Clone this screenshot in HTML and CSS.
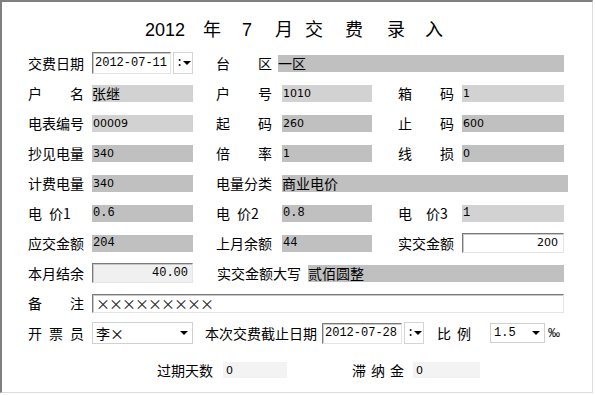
FILE: index.html
```html
<!DOCTYPE html>
<html lang="zh-CN">
<head>
  <meta charset="UTF-8" />
  <title>2012年7月交费录入</title>
  <link rel="stylesheet" href="styles.css">
</head>
<body>
  <!-- Payment entry window -->
  <div class="window">
    <h1 class="title">
      <span>2012</span><span>年</span><span>7</span><span>月</span><span>交</span><span>费</span><span>录</span><span>入</span>
    </h1>

    <div class="row">
      <span class="lbl">交费日期</span>
      <div class="date mono">2012-07-11</div>
      <div class="spin"><span>:</span><i class="caret"></i></div>
      <span class="lbl lbl-area">台　　区</span>
      <div class="box han wide">一区</div>
    </div>

    <div class="row">
      <span class="lbl">户　　名</span>
      <div class="box light han f1">张继</div>
      <span class="lbl c2">户　　号</span>
      <div class="box light f2">1010</div>
      <span class="lbl c3">箱　　码</span>
      <div class="box light f3">1</div>
    </div>

    <div class="row">
      <span class="lbl">电表编号</span>
      <div class="box light f1">00009</div>
      <span class="lbl c2">起　　码</span>
      <div class="box f2">260</div>
      <span class="lbl c3">止　　码</span>
      <div class="box f3">600</div>
    </div>

    <div class="row">
      <span class="lbl">抄见电量</span>
      <div class="box f1">340</div>
      <span class="lbl c2">倍　　率</span>
      <div class="box f2">1</div>
      <span class="lbl c3">线　　损</span>
      <div class="box f3">0</div>
    </div>

    <div class="row">
      <span class="lbl">计费电量</span>
      <div class="box f1">340</div>
      <span class="lbl c2">电量分类</span>
      <div class="box han wide">商业电价</div>
    </div>

    <div class="row">
      <span class="lbl">电&ensp;价1</span>
      <div class="box mono f1">0.6</div>
      <span class="lbl c2">电&ensp;价2</span>
      <div class="box mono f2">0.8</div>
      <span class="lbl c3">电　价3</span>
      <div class="box light mono f3">1</div>
    </div>

    <div class="row">
      <span class="lbl">应交金额</span>
      <div class="box mono f1">204</div>
      <span class="lbl c2">上月余额</span>
      <div class="box mono f2">44</div>
      <span class="lbl c3">实交金额</span>
      <div class="sunken num f3">200</div>
    </div>

    <div class="row">
      <span class="lbl">本月结余</span>
      <div class="sunken grey mono f1">40.00</div>
      <span class="lbl c2 lbl-caps">实交金额大写</span>
      <div class="box han caps">贰佰圆整</div>
    </div>

    <div class="row">
      <span class="lbl">备　　注</span>
      <div class="sunken memo">×××××××××</div>
    </div>

    <div class="row">
      <span class="lbl spaced">开票员</span>
      <div class="combo f1"><span class="han">李×</span><i class="caret"></i></div>
      <span class="lbl lbl-due">本次交费截止日期</span>
      <div class="date mono date-due">2012-07-28</div>
      <div class="spin"><span>:</span><i class="caret"></i></div>
      <span class="lbl lbl-ratio">比例</span>
      <div class="combo ratio"><span class="mono">1.5</span><i class="caret"></i></div>
      <span class="permil">‰</span>
    </div>

    <div class="row row-late">
      <span class="lbl lbl-days">过期天数</span>
      <div class="box pale days">0</div>
      <span class="lbl lbl-fine">滞纳金</span>
      <div class="box pale fine">0</div>
    </div>
  </div>
</body>
</html>
```

FILE: styles.css
```css
* {
  margin: 0;
  padding: 0;
  box-sizing: border-box;
}

body {
  background: #fff;
  color: #000;
  font-family: "Noto Sans CJK SC", "Liberation Sans", sans-serif;
  font-size: 14px;
}

/* Outer window frame */
.window {
  width: 593px;
  height: 393px;
  border-top: 2px solid #808080;
  border-left: 2px solid #808080;
  border-right: 1px solid #dcdcdc;
  border-bottom: 1px solid #dcdcdc;
  padding: 11px 0 0 26px;
}

/* Heading, each glyph on its own track */
.title {
  display: grid;
  grid-template-columns: 58px 39px 33px 30px 40px 42px 38px auto;
  margin: 0 0 1px 117px;
  height: 34px;
  line-height: 34px;
  font-family: "Liberation Sans", "Noto Sans CJK SC", sans-serif;
  font-size: 18px;
  font-weight: normal;
}

.row {
  display: flex;
  align-items: center;
  height: 30px;
}

.row-late {
  margin-top: 7px;
}

.lbl {
  flex: none;
  width: 64px;
  white-space: nowrap;
  line-height: 20px;
}
.c2 { margin-left: 23px; width: 66px; }
.c3 { margin-left: 26px; width: 64px; }
.lbl-area { margin-left: 23px; width: 62px; }
.lbl-caps { width: 91px; margin-left: 24px; }
.spaced { letter-spacing: 7px; }
.lbl-due { margin-left: 12px; width: 117px; }
.lbl-ratio { margin-left: 13px; width: 53px; letter-spacing: 6px; }
.lbl-days { margin-left: 129px; width: 66px; }
.lbl-fine { margin-left: 65px; width: 61px; letter-spacing: 5px; }

/* Read-only grey fields */
.box {
  flex: none;
  display: flex;
  align-items: center;
  height: 17px;
  padding-left: 1px;
  background: #c0c0c0;
  font-family: "DejaVu Sans", sans-serif;
  font-size: 11px;
  white-space: nowrap;
}
.box.light { background: #d2d2d2; }
.box.pale { background: #f3f3f3; padding-left: 3px; height: 16px; }
.box.han {
  font-family: "Noto Sans CJK SC", sans-serif;
  font-size: 14px;
  padding-left: 0;
}
.mono,
.box.mono {
  font-family: "Liberation Mono", monospace;
  font-size: 12px;
}

.f1 { width: 101px; }
.f2 { width: 90px; }
.f3 { width: 102px; }
.wide { width: 286px; }
.caps { width: 256px; }
.days { width: 64px; }
.fine { width: 67px; }

/* Editable, sunken inputs */
.sunken,
.date {
  flex: none;
  height: 20px;
  line-height: 18px;
  background: #fff;
  border: 1px solid;
  border-color: #7a7a7a #e4e4e4 #e4e4e4 #7a7a7a;
  box-shadow: inset 1px 1px 0 #c8c8c8;
  white-space: nowrap;
}
.sunken.num {
  text-align: right;
  padding-right: 5px;
  font-family: "DejaVu Sans", sans-serif;
  font-size: 11px;
}
.sunken.grey {
  background: #f0f0f0;
  text-align: right;
  padding-right: 4px;
}
.memo {
  width: 472px;
  height: 19px;
  line-height: 17px;
  padding-left: 3px;
  letter-spacing: -1px;
  color: #222;
}

.date {
  width: 79px;
  height: 22px;
  line-height: 20px;
  padding-left: 2px;
}
.date-due { width: 80px; height: 21px; line-height: 19px; }

.spin {
  flex: none;
  display: flex;
  align-items: center;
  justify-content: space-between;
  width: 20px;
  height: 22px;
  margin-left: 2px;
  padding: 0 3px 0 2px;
  border: 1px solid #d4d4d4;
  font-family: "Liberation Mono", monospace;
  font-size: 12px;
}

.caret {
  width: 0;
  height: 0;
  border-left: 4px solid transparent;
  border-right: 4px solid transparent;
  border-top: 4px solid #000;
}

.combo {
  flex: none;
  display: flex;
  align-items: center;
  justify-content: space-between;
  height: 22px;
  padding: 0 4px 0 3px;
  background: #fff;
  border: 1px solid #d0d0d0;
}
.ratio { width: 55px; height: 20px; }

.permil {
  margin-left: 3px;
  font-family: "Liberation Sans", sans-serif;
  font-size: 12px;
}
```
